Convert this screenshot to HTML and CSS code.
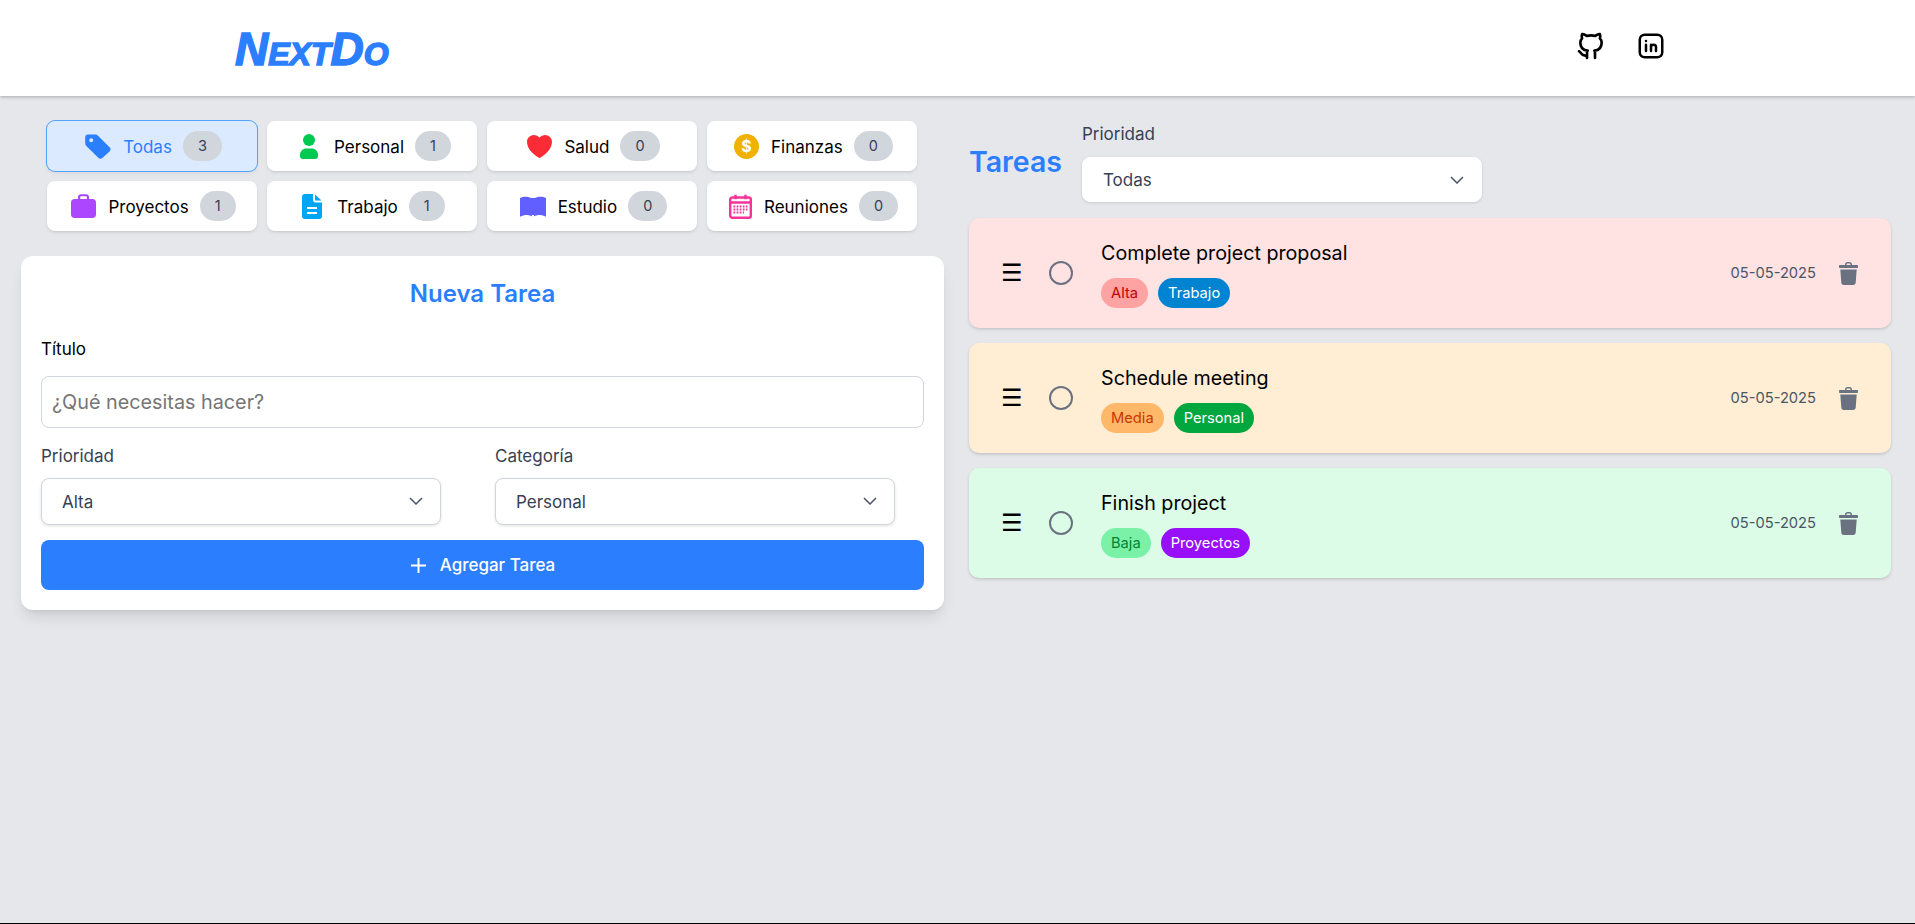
FILE: index.html
```html
<!DOCTYPE html>
<html lang="es">
<head>
<meta charset="utf-8">
<title>NextDo</title>
<link rel="stylesheet" href="styles.css">
</head>
<body>
<div class="page">
  <header class="topbar">
    <div class="logo">NextDo</div>
    <nav class="social">
      <svg class="gh" viewBox="0 0 24 24"><path d="M9 19c-4.3 1.4-4.3-2.5-6-3m12 5v-3.5c0-1 .1-1.4-.5-2c2.8-.3 5.5-1.4 5.5-6a4.6 4.6 0 0 0-1.3-3.2a4.2 4.2 0 0 0-.1-3.2s-1.1-.3-3.5 1.3a12.3 12.3 0 0 0-6.2 0c-2.4-1.6-3.5-1.3-3.5-1.3a4.2 4.2 0 0 0-.1 3.2a4.6 4.6 0 0 0-1.3 3.2c0 4.6 2.7 5.7 5.5 6c-.6.6-.6 1.2-.5 2v3.5"/></svg>
      <svg class="li" viewBox="0 0 24 24"><path d="M8 11v5M8 8v.01M12 16v-5M16 16v-3a2 2 0 1 0-4 0M3 7a4 4 0 0 1 4-4h10a4 4 0 0 1 4 4v10a4 4 0 0 1-4 4h-10a4 4 0 0 1-4-4z"/></svg>
    </nav>
  </header>

  <main class="content">
    <section class="left">
      <div class="cats">
        <button class="cat active">
          <svg class="ic ic-tag" viewBox="0 0 26 25"><path fill-rule="evenodd" d="M3 .5H10c1.200 0 2.300.5 3 1.200L24.800 13.500c1 1 1 2.700 0 3.700L17.300 24c-1 1-2.700 1-3.700 0L1.300 12C.6 11.300.2 10.400.2 9.300V3.300C.2 1.700 1.400.5 3 .5zM6.200 8.200a2 2 0 1 0 0-4 2 2 0 0 0 0 4z"/></svg>
          <span class="cat-name">Todas</span><b class="count">3</b>
        </button>
        <button class="cat">
          <svg class="ic ic-user" viewBox="0 0 18 25"><circle cx="9" cy="6" r="6"/><path d="M0 21c0-4 3-6.500 6-6.500h6c3 0 6 2.500 6 6.500v1c0 2-1 3-3 3H3c-2 0-3-1-3-3z"/></svg>
          <span class="cat-name">Personal</span><b class="count">1</b>
        </button>
        <button class="cat">
          <svg class="ic ic-heart" viewBox="2.250 3 19.500 18"><path d="m11.645 20.91-.007-.003-.022-.012a15.247 15.247 0 0 1-.383-.218 25.18 25.18 0 0 1-4.244-3.17C4.688 15.36 2.25 12.174 2.25 8.25 2.25 5.322 4.714 3 7.688 3A5.5 5.5 0 0 1 12 5.052 5.5 5.5 0 0 1 16.313 3c2.973 0 5.437 2.322 5.437 5.25 0 3.925-2.438 7.111-4.739 9.256a25.175 25.175 0 0 1-4.244 3.17 15.247 15.247 0 0 1-.383.219l-.022.012-.007.004-.003.001a.752.752 0 0 1-.704 0l-.003-.001Z"/></svg>
          <span class="cat-name">Salud</span><b class="count">0</b>
        </button>
        <button class="cat">
          <svg class="ic ic-coin" viewBox="0 0 25 25"><circle cx="12.500" cy="12.500" r="12.500"/><text x="12.500" y="18" text-anchor="middle">$</text></svg>
          <span class="cat-name">Finanzas</span><b class="count">0</b>
        </button>
        <button class="cat">
          <svg class="ic ic-case" viewBox="0 0 25 24"><path fill-rule="evenodd" d="M7 5V3C7 1.300 8.300.300 10 .300h5c1.700 0 3 1 3 2.700V5h3.500C23.500 5 25 6.500 25 8.500V20.500c0 2-1.500 3.500-3.500 3.500h-18C1.500 24 0 22.500 0 20.500V8.500C0 6.500 1.500 5 3.500 5zM9.200 5h6.600V3.300c0-.6-.4-1-1-1h-4.600c-.6 0-1 .4-1 1z"/></svg>
          <span class="cat-name">Proyectos</span><b class="count">1</b>
        </button>
        <button class="cat">
          <svg class="ic ic-file" viewBox="0 0 20 25"><path fill-rule="evenodd" d="M3 0h8v6c0 1.500 1 2.500 2.500 2.500H20V22c0 2-1 3-3 3H3c-2 0-3-1-3-3V3c0-2 1-3 3-3zM5 13v2h10v-2zM5 18v2h10v-2z"/><path d="M13 .500 19.500 6.500h-5.500c-.7 0-1-.3-1-1z"/></svg>
          <span class="cat-name">Trabajo</span><b class="count">1</b>
        </button>
        <button class="cat">
          <svg class="ic ic-book" viewBox="0 0 26 21"><path d="M0 2C3.500.200 8.500.200 12 2.500V20.500C9 18.500 4 18.500 1 20.500H0zM26 2C22.500.200 17.500.200 14 2.500V20.500C17 18.500 22 18.500 25 20.500H26z"/><path d="M11 2h4v17h-4z"/></svg>
          <span class="cat-name">Estudio</span><b class="count">0</b>
        </button>
        <button class="cat">
          <svg class="ic ic-cal" viewBox="0 0 23 25"><rect class="cal-box" x="1.200" y="3.500" width="20.600" height="20.300" rx="2"/><path class="cal-head" d="M1.200 8.500h20.600M6.500 .8v4.500M16.500 .8v4.500"/><path class="cal-dots" d="M4.500 12.500h14M4.500 15.500h14M4.500 18.500h10.500"/></svg>
          <span class="cat-name">Reuniones</span><b class="count">0</b>
        </button>
      </div>

      <form class="card">
        <h2 class="card-title">Nueva Tarea</h2>
        <label class="lbl lbl-title" for="t">Título</label>
        <input class="text-input" id="t" type="text" placeholder="¿Qué necesitas hacer?">
        <div class="selects">
          <div class="field">
            <label class="lbl">Prioridad</label>
            <div class="select-wrap">
              <select class="sel"><option>Alta</option><option>Media</option><option>Baja</option></select>
              <svg class="chev" viewBox="0 0 14 8"><path d="M1 1l6 6 6-6"/></svg>
            </div>
          </div>
          <div class="field">
            <label class="lbl">Categoría</label>
            <div class="select-wrap">
              <select class="sel"><option>Personal</option><option>Trabajo</option></select>
              <svg class="chev" viewBox="0 0 14 8"><path d="M1 1l6 6 6-6"/></svg>
            </div>
          </div>
        </div>
        <button class="add" type="button">
          <svg class="plus" viewBox="0 0 17 17"><path d="M8.500 1v15M1 8.500h15"/></svg>
          <span>Agregar Tarea</span>
        </button>
      </form>
    </section>

    <section class="right">
      <div class="right-head">
        <h2 class="tasks-title">Tareas</h2>
        <div class="field filter">
          <label class="lbl">Prioridad</label>
          <div class="select-wrap">
            <select class="sel sel-filter"><option>Todas</option><option>Alta</option></select>
            <svg class="chev" viewBox="0 0 14 8"><path d="M1 1l6 6 6-6"/></svg>
          </div>
        </div>
      </div>

      <ul class="tasks">
        <li class="task t-high">
          <span class="handle">☰</span>
          <span class="check"></span>
          <div class="task-body">
            <div class="task-name">Complete project proposal</div>
            <div class="tags"><span class="tag tag-high">Alta</span><span class="tag tag-work">Trabajo</span></div>
          </div>
          <span class="date">05-05-2025</span>
          <svg class="trash" viewBox="0 0 19 23"><path fill-rule="evenodd" d="M6 3V2.500C6 1 7 0 8.500 0h2C12 0 13 1 13 2.500V3h5c.6 0 1 .4 1 1v1c0 .6-.4 1-1 1H1C.4 6 0 5.600 0 5V4c0-.6.4-1 1-1zM7.500 3h4v-.5c0-.5-.3-1-1-1h-2c-.7 0-1 .5-1 1z"/><path d="M1.300 7.500h16.400l-1 13c-.1 1.500-1 2.500-2.500 2.500H4.800c-1.500 0-2.400-1-2.500-2.500z"/></svg>
        </li>
        <li class="task t-mid">
          <span class="handle">☰</span>
          <span class="check"></span>
          <div class="task-body">
            <div class="task-name">Schedule meeting</div>
            <div class="tags"><span class="tag tag-mid">Media</span><span class="tag tag-personal">Personal</span></div>
          </div>
          <span class="date">05-05-2025</span>
          <svg class="trash" viewBox="0 0 19 23"><path fill-rule="evenodd" d="M6 3V2.500C6 1 7 0 8.500 0h2C12 0 13 1 13 2.500V3h5c.6 0 1 .4 1 1v1c0 .6-.4 1-1 1H1C.4 6 0 5.600 0 5V4c0-.6.4-1 1-1zM7.500 3h4v-.5c0-.5-.3-1-1-1h-2c-.7 0-1 .5-1 1z"/><path d="M1.300 7.500h16.400l-1 13c-.1 1.500-1 2.500-2.500 2.500H4.800c-1.500 0-2.400-1-2.500-2.500z"/></svg>
        </li>
        <li class="task t-low">
          <span class="handle">☰</span>
          <span class="check"></span>
          <div class="task-body">
            <div class="task-name">Finish project</div>
            <div class="tags"><span class="tag tag-low">Baja</span><span class="tag tag-proj">Proyectos</span></div>
          </div>
          <span class="date">05-05-2025</span>
          <svg class="trash" viewBox="0 0 19 23"><path fill-rule="evenodd" d="M6 3V2.500C6 1 7 0 8.500 0h2C12 0 13 1 13 2.500V3h5c.6 0 1 .4 1 1v1c0 .6-.4 1-1 1H1C.4 6 0 5.600 0 5V4c0-.6.4-1 1-1zM7.500 3h4v-.5c0-.5-.3-1-1-1h-2c-.7 0-1 .5-1 1z"/><path d="M1.300 7.500h16.400l-1 13c-.1 1.500-1 2.500-2.500 2.500H4.800c-1.500 0-2.400-1-2.500-2.500z"/></svg>
        </li>
      </ul>
    </section>
  </main>
  <footer class="foot"></footer>
</div>
</body>
</html>
```

FILE: styles.css
```css
* { box-sizing: border-box; }
html, body { margin: 0; padding: 0; }
body {
  font-family: Inter, "Noto Sans", sans-serif;
  font-size: 17px;
  color: #000;
  background: #e5e7eb;
}
.page { height: 924px; display: flex; flex-direction: column; overflow: hidden; }

.topbar {
  height: 96px;
  flex: none;
  background: #fff;
  display: flex;
  align-items: center;
  justify-content: space-between;
  padding: 0 249px 0 235px;
  box-shadow: 0 1px 3px rgba(0,0,0,.2), 0 2px 4px rgba(0,0,0,.06);
  position: relative;
}
.logo {
  font-family: "Liberation Sans", sans-serif;
  font-weight: 700;
  font-style: italic;
  font-variant: small-caps;
  font-size: 46px;
  line-height: 1;
  color: #2b7fff;
  -webkit-text-stroke: 1.5px #2b7fff;
  margin-top: 1px;
}
.social { display: flex; align-items: center; gap: 29px; margin-top: -4px; }
.social svg { fill: none; stroke: #000; stroke-width: 2; stroke-linecap: round; stroke-linejoin: round; display: block; }
.gh { width: 32px; height: 32px; }
.li { width: 30px; height: 30px; }

.content {
  flex: 1;
  display: grid;
  grid-template-columns: 923px 922px;
  column-gap: 25px;
  padding: 25px 0 0 21px;
}

.cats {
  display: grid;
  grid-template-columns: repeat(4, 210px);
  grid-auto-rows: 50px;
  gap: 10px;
  margin-left: 26px;
}
.cat {
  border: 0;
  background: #fff;
  border-radius: 8px;
  font: 17px Inter, sans-serif;
  color: #000;
  display: flex;
  align-items: center;
  justify-content: center;
  padding: 0 0 0 3px;
  box-shadow: 0 2px 4px -1px rgba(0,0,0,.1), 0 1px 2px rgba(0,0,0,.06);
}
.cat.active {
  background: #dbeafe;
  color: #2b7fff;
  box-shadow: 0 0 0 1px #51a2ff, 0 2px 4px rgba(0,0,0,.08);
}
.cat-name { margin-top: 2px; }
.ic { display: block; margin-right: 12px; flex: none; }
.count {
  font-weight: 400;
  font-size: 14.500px;
  line-height: 30px;
  height: 30px;
  padding: 0 15px;
  margin-left: 11px;
  border-radius: 15px;
  background: #d1d5dc;
  color: #364153;
}
.ic-tag { width: 26px; height: 25px; fill: #2b7fff; }
.ic-user { width: 18px; height: 25px; fill: #00c950; margin-left: 4px; margin-right: 16px; }
.ic-heart { width: 25px; height: 23px; fill: #fb2c36; }
.ic-coin { width: 25px; height: 25px; fill: #f0b100; }
.ic-coin text { fill: #fff; font: 700 16px Inter, sans-serif; }
.ic-case { width: 25px; height: 24px; fill: #ad46ff; }
.ic-file { width: 20px; height: 25px; fill: #00a6f4; margin-right: 15px; }
.ic-book { width: 26px; height: 21px; fill: #615fff; }
.ic-cal { width: 23px; height: 25px; fill: none; }
.cal-box { stroke: #f6339a; stroke-width: 2.400; }
.cal-head { stroke: #f6339a; stroke-width: 2.400; }
.cal-dots { stroke: #f6339a; stroke-width: 1.800; stroke-dasharray: 1.800 1.300; }

.card {
  margin-top: 25px;
  background: #fff;
  border-radius: 12px;
  padding: 22px 20px 20px;
  box-shadow: 0 10px 15px -3px rgba(0,0,0,.1), 0 4px 6px -4px rgba(0,0,0,.1);
  display: block;
}
.card-title {
  margin: 0;
  text-align: center;
  font-size: 24px;
  line-height: 32px;
  font-weight: 600;
  color: #2b7fff;
}
.lbl { display: block; line-height: 24px; color: #364153; }
.lbl-title { color: #000; margin-top: 27px; }
.text-input {
  display: block;
  width: 100%;
  height: 52px;
  margin-top: 15px;
  border: 1px solid #d1d5dc;
  border-radius: 8px;
  padding: 0 10px;
  font: 19.800px Inter, sans-serif;
  color: #000;
  background: #fff;
}
.text-input::placeholder { color: #757575; opacity: 1; }
.selects { display: flex; gap: 54px; margin-top: 16px; }
.field { width: 400px; }
.select-wrap { position: relative; margin-top: 10px; }
.sel {
  display: block;
  width: 100%;
  height: 47px;
  appearance: none;
  -webkit-appearance: none;
  border: 1px solid #d1d5dc;
  border-radius: 8px;
  background: #fff;
  padding: 0 20px;
  font: 17px Inter, sans-serif;
  color: #364153;
  box-shadow: 0 1px 3px rgba(0,0,0,.12);
}
.chev {
  position: absolute;
  right: 18px;
  top: 19px;
  width: 14px;
  height: 8px;
  fill: none;
  stroke: #4a5565;
  stroke-width: 1.500;
}
.add {
  margin-top: 15px;
  width: 100%;
  height: 50px;
  border: 0;
  border-radius: 8px;
  background: #2b7fff;
  color: #fff;
  font: 500 17px Inter, sans-serif;
  display: flex;
  align-items: center;
  justify-content: center;
  gap: 13px;
}
.plus { width: 17px; height: 17px; fill: none; stroke: #fff; stroke-width: 2; }

.right { padding-top: 1px; }
.right-head { display: flex; align-items: center; gap: 20px; }
.tasks-title {
  margin: 0;
  font-size: 28.500px;
  line-height: 36px;
  font-weight: 600;
  color: #2b7fff;
}
.filter .select-wrap { margin-top: 11px; }
.sel-filter { height: 45px; border-color: #fff; }

.tasks { list-style: none; margin: 16px 0 0; padding: 0; display: flex; flex-direction: column; gap: 15px; }
.task {
  height: 110px;
  border-radius: 10px;
  display: flex;
  align-items: center;
  padding: 0 33px 0 32px;
  box-shadow: 0 2px 4px -1px rgba(0,0,0,.12), 0 1px 3px rgba(0,0,0,.08);
}
.t-high { background: #ffe2e2; }
.t-mid { background: #ffedd4; }
.t-low { background: #dcfce7; }
.handle { width: 17px; font: 24px/24px "DejaVu Sans", sans-serif; flex: none; overflow: visible; }
.check {
  width: 24px;
  height: 24px;
  margin-left: 31px;
  border: 2px solid #6a7282;
  border-radius: 50%;
  flex: none;
}
.task-body { margin-left: 28px; flex: 1; }
.task-name { font-size: 19.700px; line-height: 28px; }
.tags { display: flex; gap: 10px; margin-top: 11px; }
.tag { font-size: 14.700px; line-height: 30px; height: 30px; padding: 0 10px; border-radius: 15px; color: #fff; }
.tag-high { background: #ffa2a2; color: #c10007; }
.tag-mid { background: #ffb86a; color: #ca3500; }
.tag-low { background: #7bf1a8; color: #008236; }
.tag-work { background: #0084d1; }
.tag-personal { background: #00a63e; }
.tag-proj { background: #9810fa; }
.date { font-size: 14.700px; color: #4a5565; }
.trash { width: 19px; height: 23px; margin-left: 23px; fill: #6a7282; flex: none; }

.foot { height: 1px; flex: none; background: #000; }
```
